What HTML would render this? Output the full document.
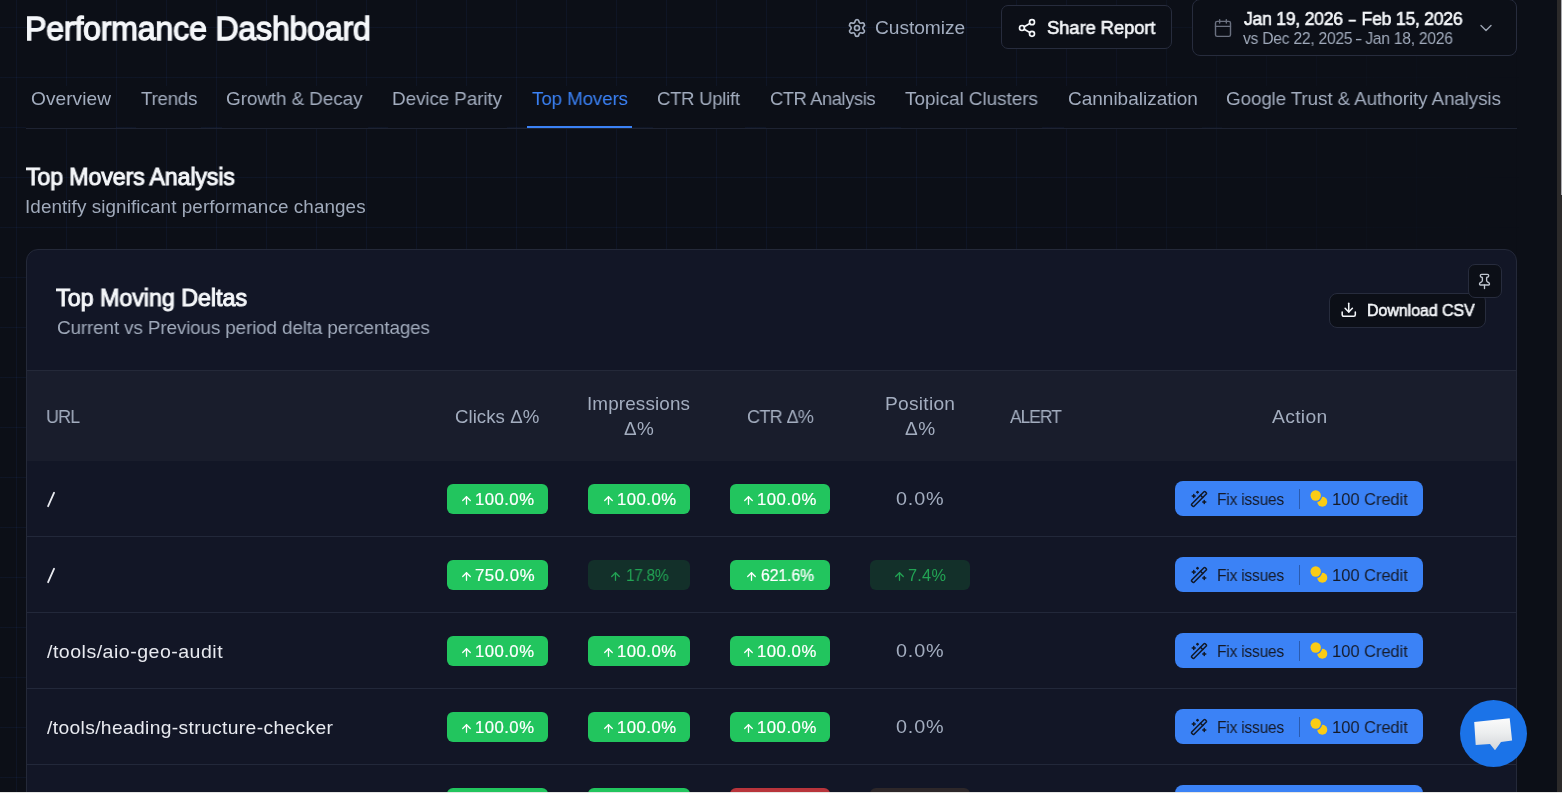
<!DOCTYPE html>
<html><head><meta charset="utf-8"><style>
html,body{margin:0;padding:0;}
body{width:1562px;height:793px;overflow:hidden;position:relative;background-color:#0c0f17;font-family:"Liberation Sans",sans-serif;}
.grid{position:absolute;left:0;top:0;width:1562px;height:793px;
background-image:linear-gradient(to right,rgba(50,90,190,0.09) 1px,transparent 1px),linear-gradient(to bottom,rgba(50,90,190,0.09) 1px,transparent 1px);
background-size:50px 50px;background-position:16px 27px;
-webkit-mask-image:linear-gradient(to right,#000 0px,#000 1000px,rgba(0,0,0,0.45) 1300px,transparent 1530px);
mask-image:linear-gradient(to right,#000 0px,#000 1000px,rgba(0,0,0,0.45) 1300px,transparent 1530px);}
.t{position:absolute;white-space:nowrap;will-change:transform;}
.b{position:absolute;}
.i{position:absolute;overflow:visible;}
</style></head><body><div class="grid"></div>
<div class="t" style="left:25.46px;top:10px;font-size:32.80px;line-height:37px;letter-spacing:-0.287px;font-weight:normal;color:#f5f7fa;-webkit-text-stroke:1.3px #f5f7fa;transform:scaleX(0.9838);transform-origin:0 0;">Performance Dashboard</div>
<svg class="i" style="left:847px;top:18px;" width="20" height="20" viewBox="0 0 24 24" fill="none" stroke="#a3adbf" stroke-width="2" stroke-linecap="round" stroke-linejoin="round"><path d="M9.671 4.136a2.34 2.34 0 0 1 4.659 0 2.34 2.34 0 0 0 3.319 1.915 2.34 2.34 0 0 1 2.33 4.033 2.34 2.34 0 0 0 0 3.831 2.34 2.34 0 0 1-2.33 4.033 2.34 2.34 0 0 0-3.319 1.915 2.34 2.34 0 0 1-4.659 0 2.34 2.34 0 0 0-3.32-1.915 2.34 2.34 0 0 1-2.33-4.033 2.34 2.34 0 0 0 0-3.831A2.34 2.34 0 0 1 6.35 6.051a2.34 2.34 0 0 0 3.319-1.915"/><circle cx="12" cy="12" r="3"/></svg>
<div class="t" style="left:875.04px;top:17px;font-size:19.20px;line-height:21px;letter-spacing:-0.057px;font-weight:normal;color:#a3adbf;transform:scaleX(0.9949);transform-origin:0 0;">Customize</div>
<div class="b" style="left:1001px;top:5px;width:171px;height:44px;background:#0c0f17;border:1px solid #272c3d;box-sizing:border-box;border-radius:7px;"></div>
<svg class="i" style="left:1017px;top:18px;" width="20" height="20" viewBox="0 0 24 24" fill="none" stroke="#f5f7fa" stroke-width="2" stroke-linecap="round" stroke-linejoin="round"><circle cx="18" cy="5" r="3"/><circle cx="6" cy="12" r="3"/><circle cx="18" cy="19" r="3"/><line x1="8.59" x2="15.42" y1="13.51" y2="17.49"/><line x1="15.41" x2="8.59" y1="6.51" y2="10.49"/></svg>
<div class="t" style="left:1046.87px;top:17px;font-size:18.70px;line-height:21px;letter-spacing:-0.125px;font-weight:normal;color:#f5f7fa;-webkit-text-stroke:0.6px #f5f7fa;transform:scaleX(0.9876);transform-origin:0 0;">Share Report</div>
<div class="b" style="left:1192px;top:-1px;width:325px;height:57px;background:#0c0f17;border:1px solid #272c3d;box-sizing:border-box;border-radius:8px;"></div>
<svg class="i" style="left:1213px;top:18px;" width="20" height="20" viewBox="0 0 24 24" fill="none" stroke="#6b7180" stroke-width="1.7" stroke-linecap="round" stroke-linejoin="round"><path d="M8 2v4"/><path d="M16 2v4"/><rect width="18" height="18" x="3" y="4" rx="2"/><path d="M3 10h18"/></svg>
<div class="t" style="left:1243.82px;top:8px;font-size:18.30px;line-height:21px;letter-spacing:-0.296px;font-weight:normal;color:#f5f7fa;-webkit-text-stroke:0.6px #f5f7fa;transform:scaleX(0.9670);transform-origin:0 0;">Jan 19, 2026 <span style="display:inline-block;transform:scaleX(0.68)">–</span> Feb 15, 2026</div>
<div class="t" style="left:1243.12px;top:29px;font-size:16.23px;line-height:18px;letter-spacing:-0.270px;font-weight:normal;color:#a0aabb;transform:scaleX(0.9651);transform-origin:0 0;">vs Dec 22, 2025 <span style="display:inline-block;transform:scaleX(1.4)">-</span> Jan 18, 2026</div>
<svg class="i" style="left:1476px;top:18px;" width="20" height="20" viewBox="0 0 24 24" fill="none" stroke="#9aa2b0" stroke-width="1.7" stroke-linecap="round" stroke-linejoin="round"><path d="m6 9 6 6 6-6"/></svg>
<div class="b" style="left:26px;top:128px;width:1491px;height:1px;background:#1e2332;border-radius:0px;"></div>
<div class="b" style="left:26px;top:86px;width:90px;height:42px;background:#0c0f17;border-radius:0px;"></div>
<div class="b" style="left:136px;top:86px;width:65px;height:42px;background:#0c0f17;border-radius:0px;"></div>
<div class="b" style="left:222px;top:86px;width:146px;height:42px;background:#0c0f17;border-radius:0px;"></div>
<div class="b" style="left:388px;top:86px;width:119px;height:42px;background:#0c0f17;border-radius:0px;"></div>
<div class="b" style="left:527px;top:86px;width:105px;height:42px;background:#0c0f17;border-radius:0px;"></div>
<div class="b" style="left:653px;top:86px;width:92px;height:42px;background:#0c0f17;border-radius:0px;"></div>
<div class="b" style="left:766px;top:86px;width:114px;height:42px;background:#0c0f17;border-radius:0px;"></div>
<div class="b" style="left:901px;top:86px;width:141px;height:42px;background:#0c0f17;border-radius:0px;"></div>
<div class="b" style="left:1064px;top:86px;width:138px;height:42px;background:#0c0f17;border-radius:0px;"></div>
<div class="b" style="left:1222px;top:86px;width:284px;height:42px;background:#0c0f17;border-radius:0px;"></div>
<div class="b" style="left:527px;top:126px;width:105px;height:2px;background:#3b82f6;border-radius:0px;"></div>
<div class="t" style="left:30.64px;top:88px;font-size:19.00px;line-height:21px;letter-spacing:0.052px;font-weight:normal;color:#a3adbf;transform:scaleX(1.0046);transform-origin:0 0;">Overview</div>
<div class="t" style="left:140.63px;top:88px;font-size:19.00px;line-height:21px;letter-spacing:-0.210px;font-weight:normal;color:#a3adbf;transform:scaleX(0.9817);transform-origin:0 0;">Trends</div>
<div class="t" style="left:226.46px;top:88px;font-size:19.00px;line-height:21px;letter-spacing:-0.068px;font-weight:normal;color:#a3adbf;transform:scaleX(0.9935);transform-origin:0 0;">Growth &amp; Decay</div>
<div class="t" style="left:391.79px;top:88px;font-size:19.00px;line-height:21px;letter-spacing:-0.079px;font-weight:normal;color:#a3adbf;transform:scaleX(0.9914);transform-origin:0 0;">Device Parity</div>
<div class="t" style="left:531.62px;top:88px;font-size:19.00px;line-height:21px;letter-spacing:-0.122px;font-weight:normal;color:#3b82f6;transform:scaleX(0.9887);transform-origin:0 0;">Top Movers</div>
<div class="t" style="left:657.08px;top:88px;font-size:19.00px;line-height:21px;letter-spacing:-0.256px;font-weight:normal;color:#a3adbf;transform:scaleX(0.9734);transform-origin:0 0;">CTR Uplift</div>
<div class="t" style="left:770.09px;top:88px;font-size:19.00px;line-height:21px;letter-spacing:-0.389px;font-weight:normal;color:#a3adbf;transform:scaleX(0.9620);transform-origin:0 0;">CTR Analysis</div>
<div class="t" style="left:905.22px;top:88px;font-size:19.00px;line-height:21px;letter-spacing:-0.040px;font-weight:normal;color:#a3adbf;transform:scaleX(0.9955);transform-origin:0 0;">Topical Clusters</div>
<div class="t" style="left:1068.05px;top:88px;font-size:19.00px;line-height:21px;letter-spacing:-0.006px;font-weight:normal;color:#a3adbf;">Cannibalization</div>
<div class="t" style="left:1226.26px;top:88px;font-size:19.00px;line-height:21px;letter-spacing:-0.094px;font-weight:normal;color:#a3adbf;transform:scaleX(0.9892);transform-origin:0 0;">Google Trust &amp; Authority Analysis</div>
<div class="t" style="left:25.63px;top:164px;font-size:23.50px;line-height:26px;letter-spacing:-0.148px;font-weight:normal;color:#f5f7fa;-webkit-text-stroke:1.0px #f5f7fa;transform:scaleX(0.9875);transform-origin:0 0;">Top Movers Analysis</div>
<div class="t" style="left:24.80px;top:196px;font-size:18.70px;line-height:21px;letter-spacing:0.078px;font-weight:normal;color:#a0aabb;transform:scaleX(1.0091);transform-origin:0 0;">Identify significant performance changes</div>
<div class="b" style="left:26px;top:249px;width:1491px;height:651px;background:#121626;border:1px solid #242939;box-sizing:border-box;border-radius:12px;"></div>
<div class="t" style="left:56.43px;top:285px;font-size:23.50px;line-height:26px;letter-spacing:-0.072px;font-weight:normal;color:#f5f7fa;-webkit-text-stroke:1.0px #f5f7fa;transform:scaleX(0.9940);transform-origin:0 0;">Top Moving Deltas</div>
<div class="t" style="left:57.05px;top:317px;font-size:19.28px;line-height:21px;letter-spacing:-0.160px;font-weight:normal;color:#a0aabb;transform:scaleX(0.9822);transform-origin:0 0;">Current vs Previous period delta percentages</div>
<div class="b" style="left:1329px;top:293px;width:157px;height:35px;background:#0c0f17;border:1px solid #272c3d;box-sizing:border-box;border-radius:8px;"></div>
<svg class="i" style="left:1339.85px;top:300.85px;" width="17.5" height="17.5" viewBox="0 0 24 24" fill="none" stroke="#f5f7fa" stroke-width="2.1" stroke-linecap="round" stroke-linejoin="round"><path d="M12 15V3"/><path d="M21 15v4a2 2 0 0 1-2 2H5a2 2 0 0 1-2-2v-4"/><path d="m7 10 5 5 5-5"/></svg>
<div class="t" style="left:1366.92px;top:301px;font-size:16.10px;line-height:18px;letter-spacing:-0.068px;font-weight:normal;color:#f5f7fa;-webkit-text-stroke:0.6px #f5f7fa;transform:scaleX(0.9931);transform-origin:0 0;">Download CSV</div>
<div class="b" style="left:1468px;top:264px;width:34px;height:34px;background:#0c0f17;border:1px solid #272c3d;box-sizing:border-box;border-radius:7px;"></div>
<svg class="i" style="left:1476.4px;top:273.4px;" width="17" height="17" viewBox="0 0 24 24" fill="none" stroke="#c0c6d0" stroke-width="1.9" stroke-linecap="round" stroke-linejoin="round"><path d="M12 17v5"/><path d="M9 10.76a2 2 0 0 1-1.11 1.79l-1.78.9A2 2 0 0 0 5 15.24V16a1 1 0 0 0 1 1h12a1 1 0 0 0 1-1v-.76a2 2 0 0 0-1.11-1.79l-1.78-.9A2 2 0 0 1 15 10.76V7a1 1 0 0 1 1-1 2 2 0 0 0 0-4H8a2 2 0 0 0 0 4 1 1 0 0 1 1 1z"/></svg>
<div class="b" style="left:27px;top:370px;width:1489px;height:1px;background:#242939;border-radius:0px;"></div>
<div class="b" style="left:27px;top:371px;width:1489px;height:90px;background:#191d2c;border-radius:0px;"></div>
<div class="t" style="left:46.35px;top:406px;font-size:18.90px;line-height:21px;letter-spacing:-0.902px;font-weight:normal;color:#a3adbf;transform:scaleX(0.9497);transform-origin:0 0;">URL</div>
<div class="t" style="left:455.37px;top:406px;font-size:18.60px;line-height:21px;letter-spacing:0.036px;font-weight:normal;color:#a3adbf;transform:scaleX(1.0035);transform-origin:0 0;">Clicks Δ%</div>
<div class="t" style="left:586.90px;top:393px;font-size:18.60px;line-height:21px;letter-spacing:0.133px;font-weight:normal;color:#a3adbf;transform:scaleX(1.0135);transform-origin:0 0;">Impressions</div>
<div class="t" style="left:623.73px;top:418px;font-size:18.60px;line-height:21px;letter-spacing:0.443px;font-weight:normal;color:#a3adbf;transform:scaleX(1.0159);transform-origin:0 0;">Δ%</div>
<div class="t" style="left:746.60px;top:406px;font-size:18.90px;line-height:21px;letter-spacing:-0.667px;font-weight:normal;color:#a3adbf;transform:scaleX(0.9536);transform-origin:0 0;">CTR Δ%</div>
<div class="t" style="left:884.87px;top:393px;font-size:18.60px;line-height:21px;letter-spacing:0.266px;font-weight:normal;color:#a3adbf;transform:scaleX(1.0293);transform-origin:0 0;">Position</div>
<div class="t" style="left:904.63px;top:418px;font-size:18.60px;line-height:21px;letter-spacing:0.639px;font-weight:normal;color:#a3adbf;transform:scaleX(1.0230);transform-origin:0 0;">Δ%</div>
<div class="t" style="left:1010.00px;top:406px;font-size:18.90px;line-height:21px;letter-spacing:-1.116px;font-weight:normal;color:#a3adbf;transform:scaleX(0.9258);transform-origin:0 0;">ALERT</div>
<div class="t" style="left:1271.50px;top:406px;font-size:18.80px;line-height:21px;letter-spacing:0.292px;font-weight:normal;color:#a3adbf;transform:scaleX(1.0286);transform-origin:0 0;">Action</div>
<div class="b" style="left:27px;top:536px;width:1489px;height:1px;background:#22283a;border-radius:0px;"></div>
<svg class="i" style="left:0;top:461px" width="80" height="76"><line x1="48.1" y1="45.2" x2="54.1" y2="31.7" stroke="#e8eaf0" stroke-width="1.8" stroke-linecap="round"/></svg>
<div class="b" style="left:447px;top:484px;width:101px;height:30px;background:#22c55e;border-radius:6px;"></div>
<svg class="i" style="left:459.95px;top:493.85px;" width="13" height="13" viewBox="0 0 24 24" fill="none" stroke="white" stroke-width="2.4" stroke-linecap="round" stroke-linejoin="round"><path d="m5 12 7-7 7 7"/><path d="M12 19V5"/></svg>
<div class="t" style="left:475.15px;top:491px;font-size:16.00px;line-height:17px;letter-spacing:0.454px;font-weight:normal;color:white;-webkit-text-stroke:0.2px white;transform:scaleX(1.0430);transform-origin:0 0;">100.0%</div>
<div class="b" style="left:588px;top:484px;width:102px;height:30px;background:#22c55e;border-radius:6px;"></div>
<svg class="i" style="left:601.65px;top:493.85px;" width="13" height="13" viewBox="0 0 24 24" fill="none" stroke="white" stroke-width="2.4" stroke-linecap="round" stroke-linejoin="round"><path d="m5 12 7-7 7 7"/><path d="M12 19V5"/></svg>
<div class="t" style="left:617.15px;top:491px;font-size:16.00px;line-height:17px;letter-spacing:0.464px;font-weight:normal;color:white;-webkit-text-stroke:0.2px white;transform:scaleX(1.0440);transform-origin:0 0;">100.0%</div>
<div class="b" style="left:730px;top:484px;width:100px;height:30px;background:#22c55e;border-radius:6px;"></div>
<svg class="i" style="left:742.3px;top:493.85px;" width="13" height="13" viewBox="0 0 24 24" fill="none" stroke="white" stroke-width="2.4" stroke-linecap="round" stroke-linejoin="round"><path d="m5 12 7-7 7 7"/><path d="M12 19V5"/></svg>
<div class="t" style="left:757.15px;top:491px;font-size:16.00px;line-height:17px;letter-spacing:0.483px;font-weight:normal;color:white;-webkit-text-stroke:0.2px white;transform:scaleX(1.0458);transform-origin:0 0;">100.0%</div>
<div class="t" style="left:896.41px;top:488px;font-size:18.70px;line-height:21px;letter-spacing:0.804px;font-weight:normal;color:#a3adbf;transform:scaleX(1.0585);transform-origin:0 0;">0.0%</div>
<div class="b" style="left:1175px;top:481px;width:248px;height:35px;background:#3b82f6;border-radius:8px;"></div>
<svg class="i" style="left:1190px;top:489.5px;" width="18" height="18" viewBox="0 0 24 24" fill="none" stroke="#111827" stroke-width="2" stroke-linecap="round" stroke-linejoin="round"><path d="m21.64 3.64-1.28-1.28a1.21 1.21 0 0 0-1.72 0L2.36 18.64a1.21 1.21 0 0 0 0 1.72l1.28 1.28a1.2 1.2 0 0 0 1.72 0L21.64 5.36a1.2 1.2 0 0 0 0-1.72"/><path d="m14 7 3 3"/><path d="M5 6v4"/><path d="M19 14v4"/><path d="M10 2v2"/><path d="M7 8H3"/><path d="M21 16h-4"/><path d="M11 3H9"/></svg>
<div class="t" style="left:1216.55px;top:490px;font-size:16.09px;line-height:18px;letter-spacing:-0.234px;font-weight:normal;color:#151a28;transform:scaleX(0.9697);transform-origin:0 0;">Fix issues</div>
<div class="b" style="left:1299px;top:489px;width:1px;height:20px;background:#2a5bb0;border-radius:0px;"></div>
<svg class="i" style="left:1308px;top:487px" width="22" height="22" viewBox="0 0 22 22"><defs><mask id="m0"><rect width="22" height="22" fill="white"/><circle cx="7.7" cy="8.5" r="6.6" fill="black"/></mask></defs><circle cx="7.7" cy="8.5" r="5.2" fill="#facc15"/><circle cx="14.3" cy="14.8" r="5" fill="#facc15" mask="url(#m0)"/></svg>
<div class="t" style="left:1331.76px;top:490px;font-size:16.67px;line-height:19px;letter-spacing:-0.061px;font-weight:normal;color:#151a28;transform:scaleX(0.9927);transform-origin:0 0;">100 Credit</div>
<div class="b" style="left:27px;top:612px;width:1489px;height:1px;background:#22283a;border-radius:0px;"></div>
<svg class="i" style="left:0;top:537px" width="80" height="76"><line x1="48.1" y1="45.2" x2="54.1" y2="31.7" stroke="#e8eaf0" stroke-width="1.8" stroke-linecap="round"/></svg>
<div class="b" style="left:447px;top:560px;width:101px;height:30px;background:#22c55e;border-radius:6px;"></div>
<svg class="i" style="left:459.55px;top:569.85px;" width="13" height="13" viewBox="0 0 24 24" fill="none" stroke="white" stroke-width="2.4" stroke-linecap="round" stroke-linejoin="round"><path d="m5 12 7-7 7 7"/><path d="M12 19V5"/></svg>
<div class="t" style="left:475.07px;top:567px;font-size:16.00px;line-height:17px;letter-spacing:0.512px;font-weight:normal;color:white;-webkit-text-stroke:0.2px white;transform:scaleX(1.0481);transform-origin:0 0;">750.0%</div>
<div class="b" style="left:588px;top:560px;width:102px;height:30px;background:#13302a;border-radius:6px;"></div>
<svg class="i" style="left:609.25px;top:569.85px;" width="13" height="13" viewBox="0 0 24 24" fill="none" stroke="#22a354" stroke-width="2.4" stroke-linecap="round" stroke-linejoin="round"><path d="m5 12 7-7 7 7"/><path d="M12 19V5"/></svg>
<div class="t" style="left:625.54px;top:567px;font-size:16.00px;line-height:17px;letter-spacing:-0.356px;font-weight:normal;color:#22a354;transform:scaleX(0.9674);transform-origin:0 0;">17.8%</div>
<div class="b" style="left:730px;top:560px;width:100px;height:30px;background:#22c55e;border-radius:6px;"></div>
<svg class="i" style="left:745.0px;top:569.85px;" width="13" height="13" viewBox="0 0 24 24" fill="none" stroke="white" stroke-width="2.4" stroke-linecap="round" stroke-linejoin="round"><path d="m5 12 7-7 7 7"/><path d="M12 19V5"/></svg>
<div class="t" style="left:760.61px;top:567px;font-size:16.00px;line-height:17px;letter-spacing:-0.117px;font-weight:normal;color:white;-webkit-text-stroke:0.2px white;transform:scaleX(0.9890);transform-origin:0 0;">621.6%</div>
<div class="b" style="left:870px;top:560px;width:100px;height:30px;background:#13302a;border-radius:6px;"></div>
<svg class="i" style="left:892.65px;top:569.85px;" width="13" height="13" viewBox="0 0 24 24" fill="none" stroke="#22a354" stroke-width="2.4" stroke-linecap="round" stroke-linejoin="round"><path d="m5 12 7-7 7 7"/><path d="M12 19V5"/></svg>
<div class="t" style="left:908.38px;top:567px;font-size:16.00px;line-height:17px;letter-spacing:0.244px;font-weight:normal;color:#22a354;transform:scaleX(1.0209);transform-origin:0 0;">7.4%</div>
<div class="b" style="left:1175px;top:557px;width:248px;height:35px;background:#3b82f6;border-radius:8px;"></div>
<svg class="i" style="left:1190px;top:565.5px;" width="18" height="18" viewBox="0 0 24 24" fill="none" stroke="#111827" stroke-width="2" stroke-linecap="round" stroke-linejoin="round"><path d="m21.64 3.64-1.28-1.28a1.21 1.21 0 0 0-1.72 0L2.36 18.64a1.21 1.21 0 0 0 0 1.72l1.28 1.28a1.2 1.2 0 0 0 1.72 0L21.64 5.36a1.2 1.2 0 0 0 0-1.72"/><path d="m14 7 3 3"/><path d="M5 6v4"/><path d="M19 14v4"/><path d="M10 2v2"/><path d="M7 8H3"/><path d="M21 16h-4"/><path d="M11 3H9"/></svg>
<div class="t" style="left:1216.55px;top:566px;font-size:16.09px;line-height:18px;letter-spacing:-0.234px;font-weight:normal;color:#151a28;transform:scaleX(0.9697);transform-origin:0 0;">Fix issues</div>
<div class="b" style="left:1299px;top:565px;width:1px;height:20px;background:#2a5bb0;border-radius:0px;"></div>
<svg class="i" style="left:1308px;top:563px" width="22" height="22" viewBox="0 0 22 22"><defs><mask id="m1"><rect width="22" height="22" fill="white"/><circle cx="7.7" cy="8.5" r="6.6" fill="black"/></mask></defs><circle cx="7.7" cy="8.5" r="5.2" fill="#facc15"/><circle cx="14.3" cy="14.8" r="5" fill="#facc15" mask="url(#m1)"/></svg>
<div class="t" style="left:1331.76px;top:566px;font-size:16.67px;line-height:19px;letter-spacing:-0.061px;font-weight:normal;color:#151a28;transform:scaleX(0.9927);transform-origin:0 0;">100 Credit</div>
<div class="b" style="left:27px;top:688px;width:1489px;height:1px;background:#22283a;border-radius:0px;"></div>
<div class="t" style="left:47.30px;top:641px;font-size:18.50px;line-height:21px;letter-spacing:0.467px;font-weight:normal;color:#e8eaf0;transform:scaleX(1.0564);transform-origin:0 0;">/tools/aio-geo-audit</div>
<div class="b" style="left:447px;top:636px;width:101px;height:30px;background:#22c55e;border-radius:6px;"></div>
<svg class="i" style="left:459.95px;top:645.85px;" width="13" height="13" viewBox="0 0 24 24" fill="none" stroke="white" stroke-width="2.4" stroke-linecap="round" stroke-linejoin="round"><path d="m5 12 7-7 7 7"/><path d="M12 19V5"/></svg>
<div class="t" style="left:475.15px;top:643px;font-size:16.00px;line-height:17px;letter-spacing:0.454px;font-weight:normal;color:white;-webkit-text-stroke:0.2px white;transform:scaleX(1.0430);transform-origin:0 0;">100.0%</div>
<div class="b" style="left:588px;top:636px;width:102px;height:30px;background:#22c55e;border-radius:6px;"></div>
<svg class="i" style="left:601.65px;top:645.85px;" width="13" height="13" viewBox="0 0 24 24" fill="none" stroke="white" stroke-width="2.4" stroke-linecap="round" stroke-linejoin="round"><path d="m5 12 7-7 7 7"/><path d="M12 19V5"/></svg>
<div class="t" style="left:617.15px;top:643px;font-size:16.00px;line-height:17px;letter-spacing:0.464px;font-weight:normal;color:white;-webkit-text-stroke:0.2px white;transform:scaleX(1.0440);transform-origin:0 0;">100.0%</div>
<div class="b" style="left:730px;top:636px;width:100px;height:30px;background:#22c55e;border-radius:6px;"></div>
<svg class="i" style="left:742.3px;top:645.85px;" width="13" height="13" viewBox="0 0 24 24" fill="none" stroke="white" stroke-width="2.4" stroke-linecap="round" stroke-linejoin="round"><path d="m5 12 7-7 7 7"/><path d="M12 19V5"/></svg>
<div class="t" style="left:757.15px;top:643px;font-size:16.00px;line-height:17px;letter-spacing:0.483px;font-weight:normal;color:white;-webkit-text-stroke:0.2px white;transform:scaleX(1.0458);transform-origin:0 0;">100.0%</div>
<div class="t" style="left:896.41px;top:640px;font-size:18.70px;line-height:21px;letter-spacing:0.804px;font-weight:normal;color:#a3adbf;transform:scaleX(1.0585);transform-origin:0 0;">0.0%</div>
<div class="b" style="left:1175px;top:633px;width:248px;height:35px;background:#3b82f6;border-radius:8px;"></div>
<svg class="i" style="left:1190px;top:641.5px;" width="18" height="18" viewBox="0 0 24 24" fill="none" stroke="#111827" stroke-width="2" stroke-linecap="round" stroke-linejoin="round"><path d="m21.64 3.64-1.28-1.28a1.21 1.21 0 0 0-1.72 0L2.36 18.64a1.21 1.21 0 0 0 0 1.72l1.28 1.28a1.2 1.2 0 0 0 1.72 0L21.64 5.36a1.2 1.2 0 0 0 0-1.72"/><path d="m14 7 3 3"/><path d="M5 6v4"/><path d="M19 14v4"/><path d="M10 2v2"/><path d="M7 8H3"/><path d="M21 16h-4"/><path d="M11 3H9"/></svg>
<div class="t" style="left:1216.55px;top:642px;font-size:16.09px;line-height:18px;letter-spacing:-0.234px;font-weight:normal;color:#151a28;transform:scaleX(0.9697);transform-origin:0 0;">Fix issues</div>
<div class="b" style="left:1299px;top:641px;width:1px;height:20px;background:#2a5bb0;border-radius:0px;"></div>
<svg class="i" style="left:1308px;top:639px" width="22" height="22" viewBox="0 0 22 22"><defs><mask id="m2"><rect width="22" height="22" fill="white"/><circle cx="7.7" cy="8.5" r="6.6" fill="black"/></mask></defs><circle cx="7.7" cy="8.5" r="5.2" fill="#facc15"/><circle cx="14.3" cy="14.8" r="5" fill="#facc15" mask="url(#m2)"/></svg>
<div class="t" style="left:1331.76px;top:642px;font-size:16.67px;line-height:19px;letter-spacing:-0.061px;font-weight:normal;color:#151a28;transform:scaleX(0.9927);transform-origin:0 0;">100 Credit</div>
<div class="b" style="left:27px;top:764px;width:1489px;height:1px;background:#22283a;border-radius:0px;"></div>
<div class="t" style="left:47.30px;top:717px;font-size:18.50px;line-height:21px;letter-spacing:0.343px;font-weight:normal;color:#e8eaf0;transform:scaleX(1.0403);transform-origin:0 0;">/tools/heading-structure-checker</div>
<div class="b" style="left:447px;top:712px;width:101px;height:30px;background:#22c55e;border-radius:6px;"></div>
<svg class="i" style="left:459.95px;top:721.85px;" width="13" height="13" viewBox="0 0 24 24" fill="none" stroke="white" stroke-width="2.4" stroke-linecap="round" stroke-linejoin="round"><path d="m5 12 7-7 7 7"/><path d="M12 19V5"/></svg>
<div class="t" style="left:475.15px;top:719px;font-size:16.00px;line-height:17px;letter-spacing:0.454px;font-weight:normal;color:white;-webkit-text-stroke:0.2px white;transform:scaleX(1.0430);transform-origin:0 0;">100.0%</div>
<div class="b" style="left:588px;top:712px;width:102px;height:30px;background:#22c55e;border-radius:6px;"></div>
<svg class="i" style="left:601.65px;top:721.85px;" width="13" height="13" viewBox="0 0 24 24" fill="none" stroke="white" stroke-width="2.4" stroke-linecap="round" stroke-linejoin="round"><path d="m5 12 7-7 7 7"/><path d="M12 19V5"/></svg>
<div class="t" style="left:617.15px;top:719px;font-size:16.00px;line-height:17px;letter-spacing:0.464px;font-weight:normal;color:white;-webkit-text-stroke:0.2px white;transform:scaleX(1.0440);transform-origin:0 0;">100.0%</div>
<div class="b" style="left:730px;top:712px;width:100px;height:30px;background:#22c55e;border-radius:6px;"></div>
<svg class="i" style="left:742.3px;top:721.85px;" width="13" height="13" viewBox="0 0 24 24" fill="none" stroke="white" stroke-width="2.4" stroke-linecap="round" stroke-linejoin="round"><path d="m5 12 7-7 7 7"/><path d="M12 19V5"/></svg>
<div class="t" style="left:757.15px;top:719px;font-size:16.00px;line-height:17px;letter-spacing:0.483px;font-weight:normal;color:white;-webkit-text-stroke:0.2px white;transform:scaleX(1.0458);transform-origin:0 0;">100.0%</div>
<div class="t" style="left:896.41px;top:716px;font-size:18.70px;line-height:21px;letter-spacing:0.804px;font-weight:normal;color:#a3adbf;transform:scaleX(1.0585);transform-origin:0 0;">0.0%</div>
<div class="b" style="left:1175px;top:709px;width:248px;height:35px;background:#3b82f6;border-radius:8px;"></div>
<svg class="i" style="left:1190px;top:717.5px;" width="18" height="18" viewBox="0 0 24 24" fill="none" stroke="#111827" stroke-width="2" stroke-linecap="round" stroke-linejoin="round"><path d="m21.64 3.64-1.28-1.28a1.21 1.21 0 0 0-1.72 0L2.36 18.64a1.21 1.21 0 0 0 0 1.72l1.28 1.28a1.2 1.2 0 0 0 1.72 0L21.64 5.36a1.2 1.2 0 0 0 0-1.72"/><path d="m14 7 3 3"/><path d="M5 6v4"/><path d="M19 14v4"/><path d="M10 2v2"/><path d="M7 8H3"/><path d="M21 16h-4"/><path d="M11 3H9"/></svg>
<div class="t" style="left:1216.55px;top:718px;font-size:16.09px;line-height:18px;letter-spacing:-0.234px;font-weight:normal;color:#151a28;transform:scaleX(0.9697);transform-origin:0 0;">Fix issues</div>
<div class="b" style="left:1299px;top:717px;width:1px;height:20px;background:#2a5bb0;border-radius:0px;"></div>
<svg class="i" style="left:1308px;top:715px" width="22" height="22" viewBox="0 0 22 22"><defs><mask id="m3"><rect width="22" height="22" fill="white"/><circle cx="7.7" cy="8.5" r="6.6" fill="black"/></mask></defs><circle cx="7.7" cy="8.5" r="5.2" fill="#facc15"/><circle cx="14.3" cy="14.8" r="5" fill="#facc15" mask="url(#m3)"/></svg>
<div class="t" style="left:1331.76px;top:718px;font-size:16.67px;line-height:19px;letter-spacing:-0.061px;font-weight:normal;color:#151a28;transform:scaleX(0.9927);transform-origin:0 0;">100 Credit</div>
<div class="b" style="left:447px;top:788px;width:101px;height:30px;background:#22c55e;border-radius:6px;"></div>
<div class="b" style="left:588px;top:788px;width:102px;height:30px;background:#22c55e;border-radius:6px;"></div>
<div class="b" style="left:730px;top:788px;width:100px;height:30px;background:#b8343b;border-radius:6px;"></div>
<div class="b" style="left:870px;top:788px;width:100px;height:30px;background:#2d2729;border-radius:6px;"></div>
<div class="b" style="left:1175px;top:785px;width:248px;height:35px;background:#3b82f6;border-radius:8px;"></div>
<div class="b" style="left:1460px;top:700px;width:67px;height:67px;border-radius:50%;background:#1b73e8"></div>
<svg class="i" style="left:1460px;top:700px" width="67" height="67" viewBox="0 0 67 67"><defs><linearGradient id="cg" x1="0" y1="0" x2="0" y2="1"><stop offset="0" stop-color="#fbfbfb"/><stop offset="0.45" stop-color="#eceeef"/><stop offset="1" stop-color="#d2d5d9"/></linearGradient></defs><path d="M14.2 21.9 L49.7 18.2 L52.1 40.6 L41 42 L35 50.2 L30 44 L15.7 44.9 Z" fill="url(#cg)"/></svg>
<div class="b" style="left:1557px;top:0px;width:5px;height:793px;background:#2c2a2a;border-radius:0px;"></div>
<div class="b" style="left:1561px;top:0px;width:1px;height:195px;background:#a9aaae;border-radius:0px;"></div>
<div class="b" style="left:0px;top:792px;width:1562px;height:1px;background:#e6e6e4;border-radius:0px;"></div>
</body></html>
